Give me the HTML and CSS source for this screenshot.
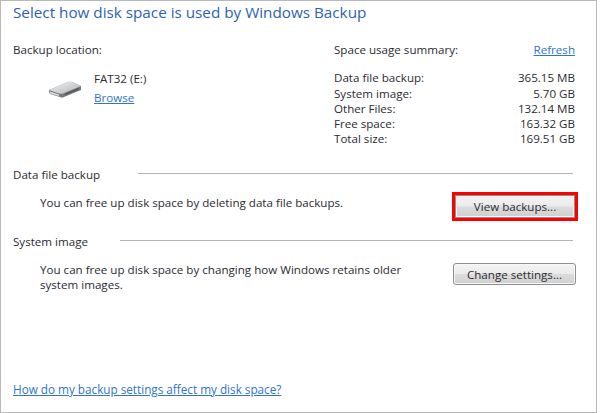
FILE: index.html
```html
<!DOCTYPE html>
<html>
<head>
    <meta charset="UTF-8">
    <title>Windows Backup</title>
    <link rel="stylesheet" href="styles.css">
</head>
<body>
    <div class="panel">
        <h1>Select how disk space is used by Windows Backup</h1>

        <div class="top">
            <div class="location">
                <div class="label">Backup location:</div>
                <div class="drive">
                    <svg class="drive-icon" width="34" height="17" viewBox="0 0 34 17">
                        <defs>
                            <linearGradient id="driveTop" x1="0" y1="0" x2="1" y2="1">
                                <stop offset="0" stop-color="#f4f4f4"/>
                                <stop offset="1" stop-color="#b0b2b4"/>
                            </linearGradient>
                        </defs>
                        <path d="M1 9 L20 1 Q22 0.300 24 1 L33 5 L33 9 L16 16 Q14 17 12 16 L2 13 Q1 12 1 9 Z" fill="#77797c"/>
                        <path d="M1 9 L20 1 Q22 0.300 24 1 L33 5 L15 12.500 Q13 13 11 12.500 Z" fill="url(#driveTop)"/>
                        <path d="M2 10.500 L11 13.500 L11 15 L2 12.500 Z" fill="#dcdcdd"/>
                        <path d="M17 12.500 L31 6.800 L31 8.500 L17 14.200 Z" fill="#55585c"/>
                    </svg>
                    <div class="drive-text">
                        <div>FAT32 (E:)</div>
                        <a href="#">Browse</a>
                    </div>
                </div>
            </div>

            <div class="summary">
                <div class="summary-head">
                    <span>Space usage summary:</span>
                    <a href="#">Refresh</a>
                </div>
                <div class="summary-row"><span>Data file backup:</span><span>365.15 MB</span></div>
                <div class="summary-row"><span>System image:</span><span>5.70 GB</span></div>
                <div class="summary-row"><span>Other Files:</span><span>132.14 MB</span></div>
                <div class="summary-row"><span>Free space:</span><span>163.32 GB</span></div>
                <div class="summary-row"><span>Total size:</span><span>169.51 GB</span></div>
            </div>
        </div>

        <div class="section-head data-head">
            <span>Data file backup</span>
            <div class="rule"></div>
        </div>
        <div class="section-body data-body">
            <p>You can free up disk space by deleting data file backups.</p>
            <div class="highlight"><button>View backups...</button></div>
        </div>

        <div class="section-head">
            <span>System image</span>
            <div class="rule"></div>
        </div>
        <div class="section-body">
            <p>You can free up disk space by changing how Windows retains older system images.</p>
            <button class="change">Change settings...</button>
        </div>

        <a class="help" href="#">How do my backup settings affect my disk space?</a>
    </div>
</body>
</html>
```

FILE: styles.css
```css
* {
    margin: 0;
    padding: 0;
    box-sizing: border-box;
}

body {
    width: 600px;
    height: 413px;
    background: #fff;
    font-family: 'Open Sans', 'Noto Sans', sans-serif;
    font-size: 11.6px;
    line-height: 15.25px;
    color: #2b2b33;
    overflow: hidden;
}

a {
    color: #2f74cc;
    text-decoration: underline;
}

.panel {
    width: 597px;
    height: 413px;
    border: 1px solid #b9b9b9;
    padding: 1px 21px 0 12px;
    position: relative;
    display: flex;
    flex-direction: column;
}

h1 {
    font-size: 15.25px;
    font-weight: 400;
    line-height: 20px;
    color: #2f5fb5;
}

.top {
    display: flex;
    justify-content: space-between;
    margin-top: 20px;
}

.location {
    width: 320px;
}

.drive {
    display: flex;
    align-items: flex-start;
    margin-top: 14px;
    padding-left: 35px;
}

.drive-icon {
    margin-top: 10px;
    margin-right: 12px;
}

.drive-text a {
    display: block;
    margin-top: 3px;
}

.summary {
    width: 241px;
}

.summary-head {
    display: flex;
    justify-content: space-between;
    margin-bottom: 13px;
}

.summary-row {
    display: flex;
    justify-content: space-between;
}

.section-head {
    display: flex;
    align-items: center;
    gap: 32px;
    padding-right: 2px;
}

.data-head {
    margin-top: 20px;
    gap: 38px;
}

.rule {
    flex: 1;
    height: 1px;
    margin-top: -1px;
    background: #b4b4b4;
}

.section-body {
    display: flex;
    justify-content: space-between;
    align-items: flex-start;
    padding-left: 27px;
    height: 37px;
    margin-top: 13px;
}

.section-body p {
    width: 370px;
}

.data-body {
    height: 39px;
}

button {
    font-family: inherit;
    font-size: 11.6px;
    color: #2b2b33;
    height: 22px;
    width: 123px;
    border: 1px solid #8e8f8f;
    border-radius: 3px;
    background: linear-gradient(#f3f3f3 0%, #ebebeb 48%, #dcdcdc 52%, #cfcfcf 100%);
    box-shadow: inset 0 0 0 1px #f6f6f6;
}

.highlight {
    border: 3px solid #ff0000;
    margin-top: -3px;
    margin-right: -3px;
    display: flex;
}

.highlight button {
    width: 120px;
    height: 23px;
    border-radius: 0;
}

.change {
    margin-top: 1px;
    margin-right: -1px;
}

.help {
    position: absolute;
    left: 12px;
    top: 381px;
    font-size: 11.72px;
}
```
